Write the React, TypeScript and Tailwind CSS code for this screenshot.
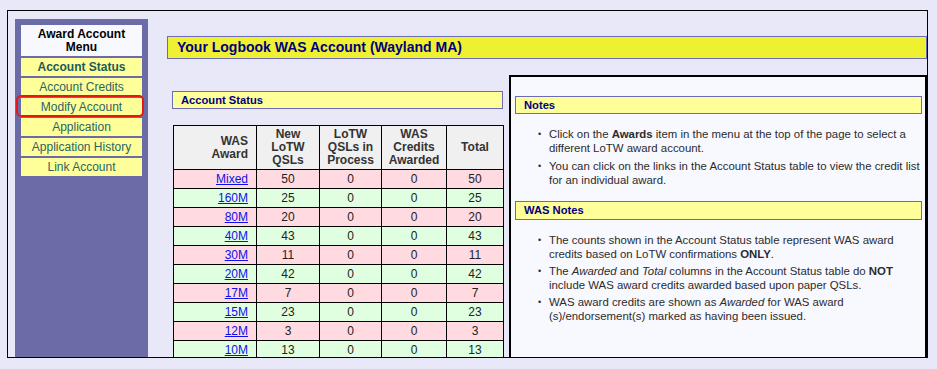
const menuItems = [
  { label: "Account Status", active: true },
  { label: "Account Credits" },
  { label: "Modify Account" },
  { label: "Application" },
  { label: "Application History" },
  { label: "Link Account" },
];

const rows = [
  { band: "Mixed", fresh: 50, total: 50 },
  { band: "160M", fresh: 25, total: 25 },
  { band: "80M", fresh: 20, total: 20 },
  { band: "40M", fresh: 43, total: 43 },
  { band: "30M", fresh: 11, total: 11 },
  { band: "20M", fresh: 42, total: 42 },
  { band: "17M", fresh: 7, total: 7 },
  { band: "15M", fresh: 23, total: 23 },
  { band: "12M", fresh: 3, total: 3 },
  { band: "10M", fresh: 13, total: 13 },
];

function Menu() {
  return (
    <div className="relative mt-[8px] ml-[7px] w-[133px] shrink-0 bg-[#6b6ba8] px-[6px] pt-[6px]">
      <div className="flex h-[31px] flex-col items-center justify-center bg-[#f8f8ff] text-[12px] font-bold leading-[13px] text-black">
        <span>Award Account</span>
        <span>Menu</span>
      </div>
      <div className="mt-[2px] flex flex-col gap-[2px]">
        {menuItems.map((item) => (
          <div
            key={item.label}
            className={
              item.active
                ? "flex h-[18px] items-center justify-center bg-[#ffff99] text-[12px] font-bold text-[#1d5a5a]"
                : "flex h-[18px] items-center justify-center bg-[#ffff99] text-[12px] text-[#2a6464]"
            }
          >
            {item.label}
          </div>
        ))}
      </div>
      {/* red marker around Modify Account */}
      <div className="absolute left-[1px] top-[76px] h-[22px] w-[128px] rounded-[5px] border-2 border-[#e51818]" />
    </div>
  );
}

function Bullets({ items, gap }: { items: React.ReactNode[]; gap: string }) {
  return (
    <ul className={"flex flex-col pl-[27px] pr-[4px] text-[11.4px] leading-[13.5px] text-[#2b2b2b] " + gap}>
      {items.map((it, i) => (
        <li key={i} className="flex">
          <span className="w-[11px] shrink-0 text-[9px]">•</span>
          <span>{it}</span>
        </li>
      ))}
    </ul>
  );
}

function StatusTable() {
  return (
    <table className="ml-[6px] mt-[16px] w-[330px] table-fixed border-collapse text-[12px] text-[#222]">
      <colgroup>
        <col className="w-[83px]" />
        <col className="w-[63px]" />
        <col className="w-[62px]" />
        <col className="w-[65px]" />
        <col className="w-[57px]" />
      </colgroup>
      <thead>
        <tr className="h-[44px] bg-[#f0f0f0] font-bold leading-[13px] text-[#333]">
          <th className="border border-black pr-[8px] text-right">WAS<br />Award</th>
          <th className="border border-black">New<br />LoTW<br />QSLs</th>
          <th className="border border-black">LoTW<br />QSLs in<br />Process</th>
          <th className="border border-black">WAS<br />Credits<br />Awarded</th>
          <th className="border border-black">Total</th>
        </tr>
      </thead>
      <tbody>
        {rows.map((r, i) => (
          <tr key={r.band} className={i % 2 === 0 ? "h-[19px] bg-[#ffdae0]" : "h-[19px] bg-[#e0ffe0]"}>
            <td className="border border-black pr-[8px] text-right">
              <a href="#" className="text-[#1010ee] underline">{r.band}</a>
            </td>
            <td className="border border-black text-center">{r.fresh}</td>
            <td className="border border-black text-center">0</td>
            <td className="border border-black text-center">0</td>
            <td className="border border-black text-center">{r.total}</td>
          </tr>
        ))}
      </tbody>
    </table>
  );
}

export default function App() {
  return (
    <div className="h-[369px] w-[937px] bg-[#e8e8f8] pl-[7px] pt-[10px] font-['Liberation_Sans',Arial,sans-serif]">
      <div className="flex h-[348px] w-[921px] overflow-hidden border border-black">
        <Menu />
        <div className="flex min-w-0 flex-1 flex-col pl-[19px] pt-[25px]">
          <div className="flex h-[23px] items-center border border-[#6b6bb8] bg-[#f0f032] pl-[9px] text-[14px] font-bold text-[#000080]">
            Your Logbook WAS Account (Wayland MA)
          </div>
          <div className="mt-[16px] flex flex-1">
            <div className="w-[342px] shrink-0 pt-[16px]">
              <div className="ml-[5px] flex h-[18px] w-[331px] items-center border border-[#6b6bb8] bg-[#ffff99] pl-[8px] text-[11.2px] font-bold text-[#000080]">
                Account Status
              </div>
              <StatusTable />
            </div>
            <div className="flex-1 border-2 border-black bg-[#f8f8ff] pt-[19px]">
              <div className="ml-[4px] mr-[3px] flex h-[18px] items-center border border-[#6b6bb8] bg-[#ffff99] pl-[8px] text-[11.2px] font-bold text-[#000080]">
                Notes
              </div>
              <div className="mt-[14px]">
                <Bullets
                  gap="gap-[5px]"
                  items={[
                    <>Click on the <b>Awards</b> item in the menu at the top of the page to select a different LoTW award account.</>,
                    <>You can click on the links in the Account Status table to view the credit list for an individual award.</>,
                  ]}
                />
              </div>
              <div className="ml-[4px] mr-[3px] mt-[14px] flex h-[19px] items-center border border-[#6b6bb8] bg-[#ffff99] pl-[8px] text-[11.2px] font-bold text-[#000080]">
                WAS Notes
              </div>
              <div className="mt-[14px]">
                <Bullets
                  gap="gap-[4px]"
                  items={[
                    <>The counts shown in the Account Status table represent WAS award credits based on LoTW confirmations <b>ONLY</b>.</>,
                    <>The <i>Awarded</i> and <i>Total</i> columns in the Account Status table do <b>NOT</b> include WAS award credits awarded based upon paper QSLs.</>,
                    <>WAS award credits are shown as <i>Awarded</i> for WAS award (s)/endorsement(s) marked as having been issued.</>,
                  ]}
                />
              </div>
            </div>
          </div>
        </div>
      </div>
    </div>
  );
}
